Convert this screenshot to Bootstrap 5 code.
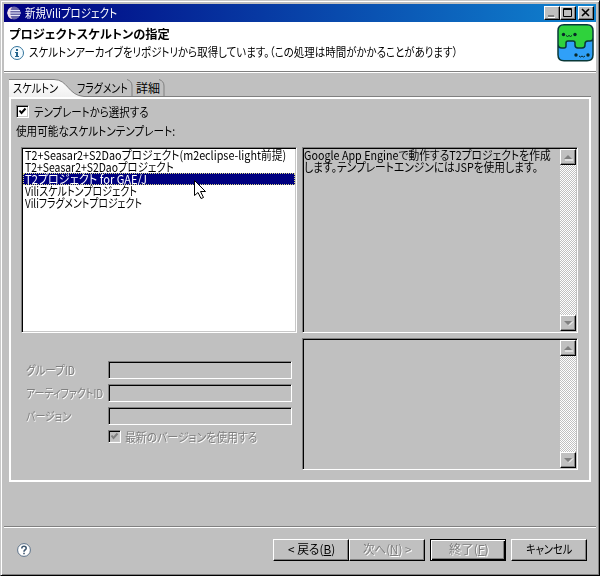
<!DOCTYPE html>
<html lang="ja">
<head>
<meta charset="utf-8">
<title>新規Viliプロジェクト</title>
<link href="https://cdn.jsdelivr.net/npm/bootstrap@5.3.0/dist/css/bootstrap.min.css" rel="stylesheet">
<style>
body{margin:0;background:#c0c0c0;overflow:hidden;color:#000;font:12px/12px "Noto Sans CJK JP",sans-serif;font-feature-settings:"palt"}
/* condensed UI text: --w is the set width, --n the natural width */
.tx{display:inline-block;white-space:nowrap;line-height:12px;text-align:left;width:calc(var(--w)*1px);transform:scaleX(calc(var(--w)/var(--n)));transform-origin:0 50%}
.t-title{--w:92;--n:105}.t-head{--w:161;--n:158}.t-msg{--w:429;--n:492}
.t-tab1{--w:45;--n:53}.t-tab2{--w:51;--n:62}.t-tab3{--w:24;--n:24}
.t-use{--w:115;--n:132}.t-avail{--w:159;--n:180}
.t-l1{--w:261;--n:290}.t-l2{--w:149;--n:172}.t-l3{--w:122;--n:132}.t-l4{--w:112;--n:134}.t-l5{--w:117;--n:143}
.t-gid{--w:49;--n:56}.t-aid{--w:77;--n:93}.t-ver{--w:45;--n:54}.t-latest{--w:132;--n:146}
.t-d1{--w:247;--n:276}.t-d2{--w:234;--n:262}
.t-back{--w:47;--n:48}.t-next{--w:48;--n:50}.t-fin{--w:39;--n:38}.t-cancel{--w:46;--n:54}
.dialog-win{width:600px;height:576px;background:#c0c0c0;border:1px solid;border-color:#c8c8c8 #000 #000 #c8c8c8;box-shadow:inset 1px 1px #fff,inset -1px -1px #808080;padding:3px}
.title-bar{height:18px;background:linear-gradient(90deg,#000080,#1084d0);color:#fff;padding:0 2px 0 3px}
.cap-btn,.sb-btn{width:16px;height:14px;background:#c0c0c0;border:1px solid;border-color:#fff #000 #000 #fff;box-shadow:inset -1px -1px #808080}
.cap-btn svg,.sb-btn svg{display:block}
.cap-close{margin-left:2px}
.head-area{height:49px;background:#fff;padding:2px 1px 0 5px}
.rule{height:2px;border-top:1px solid #808080;border-bottom:1px solid #fff}
.tabs-area{margin:6px 5px 0;height:18px;position:relative;padding:3px 0 0 4px}
.tabs-area>svg{position:absolute;left:0;top:0}
.tabs-area .tx{position:relative}
.t-tab1{margin-right:19px}.t-tab2{margin-right:8px}
.tab-body{margin:0 5px;height:385px;border:2px solid #fff;padding:6px 11px 0 5px}
.sunk{border:1px solid;border-color:#808080 #fff #fff #808080;box-shadow:inset 1px 1px #000,inset -1px -1px #c8c8c8}
.chk{width:13px;height:13px;background:#fff;margin-right:5px}
.chk svg{display:block}
.chk-off{background:#c0c0c0;margin-right:4px}
.avail-row{height:29px;padding-top:7px}
.list-wrap{padding-left:5px}
.tpl-list{width:276px;height:186px;background:#fff;padding:1px}
.tpl-list div{height:12px;padding-left:2px}
.tpl-list .sel{background:#000080;color:#fff;outline:1px dotted #d8d880;outline-offset:-1px}
.area,.fld{box-shadow:inset 1px 1px #000}
.area{width:276px;padding:1px}
.a1{height:186px}.a2{height:132px;margin-top:5px}
.desc-text{width:250px}
.sb{width:16px;background:repeating-conic-gradient(#fff 0 25%,#c0c0c0 0 50%) 0 0/2px 2px}
.sb-btn{height:16px}
.off{color:#808080;text-shadow:1px 1px #fff}
.form-area{margin-top:28px;padding-left:5px;width:276px}
.f-row{height:18px;margin-bottom:5px}
.lab{width:82px}
.fld{width:184px;height:18px}
.opt-row{padding-left:82px}
.foot{height:44px;padding:0 9px 0 13px}
.w-btn{width:76px;height:22px;background:#c0c0c0;border:1px solid;border-color:#fff #000 #000 #fff;box-shadow:inset -1px -1px #808080;padding:0 0 2px;font:inherit;color:#000}
.w-btn.def{border-color:#000;box-shadow:inset 1px 1px #fff,inset -1px -1px #000,inset -2px -2px #808080;margin:0 5px}
.w-btn.off{color:#808080}
.ptr{position:absolute;left:194px;top:180px}
</style>
</head>
<body>
<div class="dialog-win d-flex flex-column">
 <div class="title-bar d-flex align-items-center">
  <svg width="14" height="14" viewBox="0 0 14 14" class="me-1"><circle cx="7" cy="7" r="6.500" fill="#6c68a8"/><path d="M5 .8a6.500 6.500 0 0 0 0 12.400Q1.500 7 5 .8" fill="#f0d8e0"/><path d="M1 4.500h12M0 7h14M1 9.500h12" stroke="#e4e4f8" stroke-width="1.200"/></svg>
  <span class="tx t-title">新規Viliプロジェクト</span>
  <div class="d-flex ms-auto">
   <div class="cap-btn"><svg width="14" height="12"><path d="M3 9h6" stroke="#808080" stroke-width="2"/><path d="M3 10.500h7" stroke="#fff"/></svg></div>
   <div class="cap-btn"><svg width="14" height="12"><path d="M2.500 1.500h8v8h-8zM2 2.500h9" fill="none" stroke="#000"/></svg></div>
   <div class="cap-btn cap-close"><svg width="14" height="12"><path d="M3 2l7 7M10 2l-7 7" stroke="#000" stroke-width="1.6"/></svg></div>
  </div>
 </div>
 <div class="head-area d-flex justify-content-between">
  <div>
   <div class="pt-1"><b class="tx t-head">プロジェクトスケルトンの指定</b></div>
   <div class="d-flex align-items-center mt-1"><svg width="16" height="16" viewBox="0 0 16 16" class="me-1"><circle cx="8" cy="9" r="6.500" fill="#f4fbff" stroke="#33749c"/><path d="M7 5h2v2H7zM6 8h3v4h1v1H6v-1h1V9H6z" fill="#24648c"/></svg><span class="tx t-msg">スケルトンアーカイブをリポジトリから取得しています。（この処理は時間がかかることがあります）</span></div>
  </div>
  <svg width="38" height="38" viewBox="0 0 38 38"><rect x="1" y="1" width="35" height="36" rx="6" fill="#30a0f8"/><path d="M7 1h23q6 0 6 6v7q0 3-3 3h-2q-3 0-3 3v1q0 3-3 3h-4q-3 0-3-3v-2q0-2-2-2h-5q-2 0-2 2v3q0 2-2 2H5q-4 0-4-4V7q0-6 6-6z" fill="#2fd23c"/><path d="M7 .8h23q6 0 6 6v24q0 6-6 6H7q-6 0-6-6v-24q0-6 6-6zM1 20q0 4 4 4h2q2 0 2-2v-3q0-2 2-2h5q2 0 2 2v2q0 3 3 3h4q3 0 3-3v-1q0-3 3-3h2q3 0 3-3" fill="none" stroke="#083838" stroke-width="1.500"/><g fill="#082828"><circle cx="6.500" cy="10.500" r="1.700"/><circle cx="18" cy="10.500" r="1.700"/><circle cx="19" cy="31" r="1.700"/><circle cx="31" cy="31" r="1.700"/></g><path d="M9 11.500q1.500 2 3 0 1.500 2 3 0M22 32q1.500 2 3 0 1.500 2 3 0" fill="none" stroke="#082828"/></svg>
 </div>
 <div class="rule"></div>
 <div class="tabs-area d-flex">
  <svg width="582" height="18"><defs><linearGradient id="tg" x2="0" y2="1"><stop stop-color="#fff"/><stop offset="1" stop-color="#f0f0f0"/></linearGradient></defs><path d="M0 .5H45C59 .5 59 16.500 75 17.500V18H0z" fill="url(#tg)"/><path d="M0 .5H45C59 .5 59 16.500 75 17.500H582M118 .5Q123 2 123 7V17M150 .5Q155 2 155 7V17" fill="none" stroke="#808080"/></svg>
  <span class="tx t-tab1">スケルトン</span><span class="tx t-tab2">フラグメント</span><span class="tx t-tab3">詳細</span>
 </div>
 <div class="tab-body">
  <div class="d-flex align-items-center"><div class="chk sunk"><svg width="11" height="11"><path d="M2.500 4.500l2 2.500 4-4.500" fill="none" stroke="#000" stroke-width="2"/></svg></div><span class="tx t-use">テンプレートから選択する</span></div>
  <div class="avail-row"><span class="tx t-avail">使用可能なスケルトンテンプレート:</span></div>
  <div class="d-flex justify-content-between list-wrap">
   <div>
    <div class="tpl-list sunk">
     <div><span class="tx t-l1">T2+Seasar2+S2Daoプロジェクト(m2eclipse-light前提)</span></div>
     <div><span class="tx t-l2">T2+Seasar2+S2Daoプロジェクト</span></div>
     <div class="sel"><span class="tx t-l3">T2プロジェクト for GAE/J</span></div>
     <div><span class="tx t-l4">Viliスケルトンプロジェクト</span></div>
     <div><span class="tx t-l5">Viliフラグメントプロジェクト</span></div>
    </div>
    <div class="form-area">
     <div class="f-row d-flex align-items-center off"><div class="lab"><span class="tx t-gid">グループID</span></div><div class="fld sunk"></div></div>
     <div class="f-row d-flex align-items-center off"><div class="lab"><span class="tx t-aid">アーティファクトID</span></div><div class="fld sunk"></div></div>
     <div class="f-row d-flex align-items-center off"><div class="lab"><span class="tx t-ver">バージョン</span></div><div class="fld sunk"></div></div>
     <div class="d-flex align-items-center off opt-row"><div class="chk chk-off sunk"><svg width="11" height="11"><path d="M2.500 4.500l2 2.500 4-4.500" fill="none" stroke="#808080" stroke-width="2"/></svg></div><span class="tx t-latest">最新のバージョンを使用する</span></div>
    </div>
   </div>
   <div>
    <div class="area a1 sunk d-flex justify-content-between"><div class="desc-text"><div><span class="tx t-d1">Google App Engineで動作するT2プロジェクトを作成</span></div><div><span class="tx t-d2">します。テンプレートエンジンにはJSPを使用します。</span></div></div>
     <div class="sb d-flex flex-column justify-content-between"><div class="sb-btn"><svg width="14" height="14"><path d="M4 10h8" stroke="#fff"/><path d="M3 9h8L7 5z" fill="#808080"/></svg></div><div class="sb-btn"><svg width="14" height="14"><path d="M12 5.500L8 9.500" stroke="#fff"/><path d="M3 5h8L7 9z" fill="#808080"/></svg></div></div></div>
    <div class="area a2 sunk d-flex justify-content-end">
     <div class="sb d-flex flex-column justify-content-between"><div class="sb-btn"><svg width="14" height="14"><path d="M4 10h8" stroke="#fff"/><path d="M3 9h8L7 5z" fill="#808080"/></svg></div><div class="sb-btn"><svg width="14" height="14"><path d="M12 5.500L8 9.500" stroke="#fff"/><path d="M3 5h8L7 9z" fill="#808080"/></svg></div></div></div>
   </div>
  </div>
 </div>
 <div class="rule mt-auto"></div>
 <div class="foot d-flex align-items-center">
  <svg width="14" height="14" viewBox="0 0 14 14"><circle cx="7" cy="7" r="6.400" fill="#fff" stroke="#5a7088"/><path d="M4.800 5.500q0-2.200 2.200-2.200t2.200 2q0 1-1.200 1.700-1 .6-1 1.700M7 9.700v1.600" fill="none" stroke="#405870" stroke-width="1.600"/></svg>
  <div class="d-flex ms-auto">
   <button class="w-btn"><span class="tx t-back">&lt; 戻る(<u>B</u>)</span></button>
   <button class="w-btn off"><span class="tx t-next">次へ(<u>N</u>) &gt;</span></button>
   <button class="w-btn off def"><span class="tx t-fin">終了(<u>F</u>)</span></button>
   <button class="w-btn"><span class="tx t-cancel">キャンセル</span></button>
  </div>
 </div>
</div>
<svg class="ptr" width="14" height="20" viewBox="0 0 14 20"><path d="M.5.5v15l3.500-3 3 6 2.500-1-3-6h5z" fill="#fff" stroke="#000"/></svg>
<script src="https://cdn.jsdelivr.net/npm/bootstrap@5.3.0/dist/js/bootstrap.bundle.min.js"></script>
</body>
</html>
